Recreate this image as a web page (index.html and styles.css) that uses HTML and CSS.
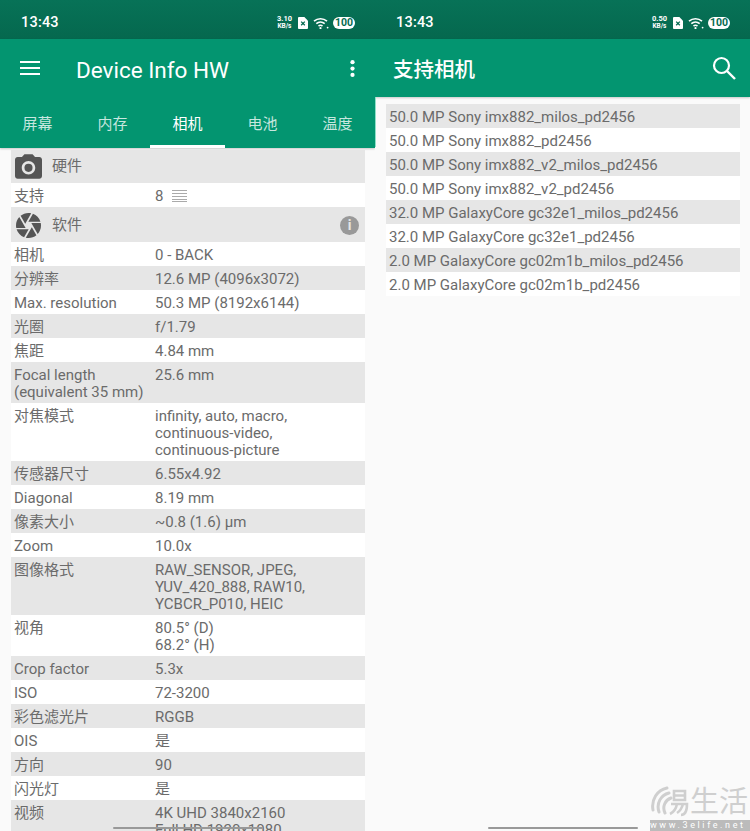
FILE: index.html
```html
<!DOCTYPE html>
<html lang="zh">
<head>
    <meta charset="UTF-8">
    <title>Device Info HW</title>
    <link rel="stylesheet" href="styles.css">
</head>
<body>
    <div class="screens">
        <!-- Left: camera tab -->
        <section class="screen">
            <div class="status-bar">
                <span class="clock">13:43</span>
                <div class="status-icons">
                    <span class="speed">3.10<br><small>KB/s</small></span>
                    <svg class="sim" viewBox="0 0 11 13"><path d="M1 0h6l4 4v8a1 1 0 0 1-1 1H1a1 1 0 0 1-1-1V1a1 1 0 0 1 1-1z" fill="#fff"/><path d="M3.500 5l4 4M7.500 5l-4 4" stroke="#066c52" stroke-width="1.400"/></svg>
                    <svg class="wifi" viewBox="0 0 16 12"><path d="M1 4.200a10 10 0 0 1 13 0M3.300 6.600a6.600 6.600 0 0 1 8.400 0M5.500 9a3.300 3.300 0 0 1 4 0" fill="none" stroke="#fff" stroke-width="1.600"/><circle cx="7.500" cy="11" r="1.100" fill="#fff"/><circle cx="14.600" cy="10.600" r=".9" fill="#fff"/></svg>
                    <span class="battery">100</span>
                </div>
            </div>
            <header class="app-bar">
                <div class="toolbar">
                    <svg class="menu-icon" viewBox="0 0 20 14"><path d="M0 1h20M0 7h20M0 13h20" stroke="#fff" stroke-width="2"/></svg>
                    <h1 class="app-title">Device Info HW</h1>
                    <svg class="more-icon" viewBox="0 0 4 16"><circle cx="2" cy="2" r="2"/><circle cx="2" cy="8" r="2"/><circle cx="2" cy="14" r="2"/></svg>
                </div>
                <nav class="tabs">
                    <span class="tab">屏幕</span>
                    <span class="tab">内存</span>
                    <span class="tab active">相机</span>
                    <span class="tab">电池</span>
                    <span class="tab">温度</span>
                </nav>
            </header>
            <div class="info-list">
                <div class="section-head hw">
                    <svg class="camera-icon" viewBox="2 2 20 18"><path d="M9 2L7.170 4H4c-1.100 0-2 .9-2 2v12c0 1.100.9 2 2 2h16c1.100 0 2-.9 2-2V6c0-1.100-.9-2-2-2h-3.170L15 2H9zm3 15c-2.760 0-5-2.240-5-5s2.240-5 5-5 5 2.240 5 5-2.240 5-5 5z"/><circle cx="12" cy="12" r="3"/></svg>
                    <span>硬件</span>
                </div>
                <div class="row plain">
                    <span>支持</span>
                    <span class="count">8
                        <svg class="list-icon" viewBox="0 0 15 12"><path d="M0 .5h15M0 3.500h15M0 6.500h15M0 9.500h15M0 11.500h15" stroke="#aaa"/></svg>
                    </span>
                </div>
                <div class="section-head sw">
                    <svg class="aperture-icon" viewBox="2 2 20 20"><path d="M9.400 10.500l4.770-8.260C13.470 2.090 12.750 2 12 2c-2.400 0-4.600.85-6.320 2.250l3.660 6.350.06-.1zM21.540 9c-.92-2.920-3.150-5.260-6-6.340L11.880 9h9.660zm.26 1h-7.490l.29.5 4.760 8.250C21 16.970 22 14.610 22 12c0-.69-.07-1.350-.2-2zM8.540 12l-3.900-6.750C3.010 7.030 2 9.390 2 12c0 .69.07 1.350.2 2h7.490l-1.150-2zm-6.080 3c.92 2.920 3.150 5.260 6 6.340L12.120 15H2.460zm11.270 0l-3.900 6.760c.7.15 1.420.24 2.170.24 2.400 0 4.600-.85 6.320-2.250l-3.660-6.350-.93 1.600z"/></svg>
                    <span>软件</span>
                    <span class="info-badge">i</span>
                </div>
                <div class="rows">
                    <div class="row"><span>相机</span><span>0 - BACK</span></div>
                    <div class="row"><span>分辨率</span><span>12.6 MP (4096x3072)</span></div>
                    <div class="row"><span>Max. resolution</span><span>50.3 MP (8192x6144)</span></div>
                    <div class="row"><span>光圈</span><span>f/1.79</span></div>
                    <div class="row"><span>焦距</span><span>4.84 mm</span></div>
                    <div class="row"><span>Focal length<br>(equivalent 35 mm)</span><span>25.6 mm</span></div>
                    <div class="row"><span>对焦模式</span><span>infinity, auto, macro,<br>continuous-video,<br>continuous-picture</span></div>
                    <div class="row"><span>传感器尺寸</span><span>6.55x4.92</span></div>
                    <div class="row"><span>Diagonal</span><span>8.19 mm</span></div>
                    <div class="row"><span>像素大小</span><span>~0.8 (1.6) µm</span></div>
                    <div class="row"><span>Zoom</span><span>10.0x</span></div>
                    <div class="row"><span>图像格式</span><span>RAW_SENSOR, JPEG,<br>YUV_420_888, RAW10,<br>YCBCR_P010, HEIC</span></div>
                    <div class="row"><span>视角</span><span>80.5° (D)<br>68.2° (H)</span></div>
                    <div class="row"><span>Crop factor</span><span>5.3x</span></div>
                    <div class="row"><span>ISO</span><span>72-3200</span></div>
                    <div class="row"><span>彩色滤光片</span><span>RGGB</span></div>
                    <div class="row"><span>OIS</span><span>是</span></div>
                    <div class="row"><span>方向</span><span>90</span></div>
                    <div class="row"><span>闪光灯</span><span>是</span></div>
                    <div class="row"><span>视频</span><span>4K UHD 3840x2160<br>Full HD 1920x1080</span></div>
                </div>
            </div>
            <div class="home-bar"></div>
        </section>

        <!-- Right: supported cameras -->
        <section class="screen">
            <div class="status-bar">
                <span class="clock">13:43</span>
                <div class="status-icons">
                    <span class="speed">0.50<br><small>KB/s</small></span>
                    <svg class="sim" viewBox="0 0 11 13"><path d="M1 0h6l4 4v8a1 1 0 0 1-1 1H1a1 1 0 0 1-1-1V1a1 1 0 0 1 1-1z" fill="#fff"/><path d="M3.500 5l4 4M7.500 5l-4 4" stroke="#066c52" stroke-width="1.400"/></svg>
                    <svg class="wifi" viewBox="0 0 16 12"><path d="M1 4.200a10 10 0 0 1 13 0M3.300 6.600a6.600 6.600 0 0 1 8.400 0M5.500 9a3.300 3.300 0 0 1 4 0" fill="none" stroke="#fff" stroke-width="1.600"/><circle cx="7.500" cy="11" r="1.100" fill="#fff"/><circle cx="14.600" cy="10.600" r=".9" fill="#fff"/></svg>
                    <span class="battery">100</span>
                </div>
            </div>
            <header class="app-bar sub">
                <h1 class="sub-title">支持相机</h1>
                <svg class="search-icon" viewBox="0 0 24 24"><circle cx="9.500" cy="9.500" r="7.500" fill="none" stroke="#fff" stroke-width="2.200"/><path d="M15 15l8 8" stroke="#fff" stroke-width="2.400"/></svg>
            </header>
            <div class="edge"></div>
            <div class="camera-list">
                <div class="camera-item">50.0 MP Sony imx882_milos_pd2456</div>
                <div class="camera-item">50.0 MP Sony imx882_pd2456</div>
                <div class="camera-item">50.0 MP Sony imx882_v2_milos_pd2456</div>
                <div class="camera-item">50.0 MP Sony imx882_v2_pd2456</div>
                <div class="camera-item">32.0 MP GalaxyCore gc32e1_milos_pd2456</div>
                <div class="camera-item">32.0 MP GalaxyCore gc32e1_pd2456</div>
                <div class="camera-item">2.0 MP GalaxyCore gc02m1b_milos_pd2456</div>
                <div class="camera-item">2.0 MP GalaxyCore gc02m1b_pd2456</div>
            </div>
            <div class="home-bar"></div>
            <div class="watermark">
                <div class="mark-top">
                    <svg class="mark-swirl" viewBox="0 0 40 32"><path d="M3 24C1 14 7 4 17 2M9 26C6 17 11 9 19 7M15 27c-3-6 0-13 6-15" fill="none" stroke="#cfcfcf" stroke-width="3" stroke-linecap="round"/><path d="M24 5h11v9H24zM24 9.500h11M21 18h16c0 7-2 11-6 11M27 18c-1 5-3 8-7 10M33 18c-1 4-3 7-6 9" fill="none" stroke="#cfcfcf" stroke-width="2.600"/></svg>
                    <span class="mark-name">生活</span>
                </div>
                <div class="mark-url">www.3elife.net</div>
            </div>
        </section>
    </div>
</body>
</html>
```

FILE: styles.css
```css
/* Two phone screens side by side */
html, body {
    height: 100%;
    margin: 0;
    padding: 0;
    overflow: hidden;
    background: #fafafa;
    font-family: Roboto, 'Noto Sans CJK SC', sans-serif;
}

.screens {
    display: grid;
    grid-template-columns: 375px 375px;
    height: 831px;
}

.screen {
    position: relative;
    height: 831px;
    overflow: hidden;
    background: #fafafa;
}

/* Status bar */
.status-bar {
    display: flex;
    justify-content: space-between;
    align-items: center;
    height: 39px;
    padding: 6px 20px 0 21px;
    box-sizing: border-box;
    background: linear-gradient(#077257, #05684e);
    color: #fff;
}

.clock {
    font-size: 14.5px;
    font-weight: 500;
    letter-spacing: 0.2px;
}

.status-icons {
    display: flex;
    align-items: center;
    gap: 6px;
}

.speed {
    font-size: 7.5px;
    font-weight: 700;
    line-height: 7px;
    text-align: center;
}

.speed small {
    font-size: 6.5px;
}

.sim {
    width: 10px;
    height: 12px;
}

.wifi {
    width: 16px;
    height: 12px;
    margin-left: -1px;
    margin-right: -2px;
}

.battery {
    width: 22px;
    height: 12px;
    border-radius: 6px;
    background: #fff;
    color: #066c52;
    font-size: 10.5px;
    font-weight: 700;
    line-height: 12px;
    text-align: center;
}

/* App bar and tabs */
.app-bar {
    height: 109px;
    background: #039570;
    color: #fff;
    box-shadow: 0 1px 2px rgba(0, 0, 0, 0.2);
}

.toolbar {
    display: flex;
    align-items: center;
    height: 58px;
    padding: 0 20px;
}

.menu-icon {
    width: 20px;
    height: 14px;
    margin-right: 36px;
}

.app-title, .sub-title {
    flex: 1;
    margin: 0;
    font-weight: 400;
}

.app-title {
    padding-top: 4px;
    font-size: 22.5px;
}

.more-icon {
    width: 5px;
    height: 17px;
    fill: #fff;
}

.tabs {
    display: grid;
    grid-template-columns: repeat(5, 75px);
    height: 51px;
}

.tab {
    display: flex;
    align-items: center;
    justify-content: center;
    box-sizing: border-box;
    padding-top: 2px;
    border-bottom: 3px solid transparent;
    font-size: 15px;
    color: rgba(255, 255, 255, 0.78);
}

.tab.active {
    color: #fff;
    border-bottom-color: #fff;
}

.app-bar.sub {
    display: flex;
    align-items: center;
    height: 58px;
    padding: 0 14px 0 18px;
}

.sub-title {
    font-size: 20.5px;
    font-weight: 500;
}

.search-icon {
    width: 24px;
    height: 24px;
}

.edge {
    position: absolute;
    left: 0;
    top: 97px;
    width: 1px;
    height: 50px;
    background: #8fe0c8;
}

/* Info rows */
.info-list {
    margin: 2px 10px 0 11px;
    font-size: 15px;
    line-height: 17px;
    color: #6b6b6b;
}

.section-head {
    display: flex;
    align-items: center;
    background: #e6e6e6;
}

.section-head.hw {
    height: 33px;
}

.section-head.sw {
    height: 34px;
    padding-top: 1px;
}

.camera-icon {
    width: 27px;
    height: 25px;
    fill: #555;
    margin: 0 10px 0 4px;
}

.aperture-icon {
    width: 25px;
    height: 25px;
    fill: #555;
    margin: 0 11px 0 5px;
}

.info-badge {
    width: 19px;
    height: 19px;
    margin: 0 6px 0 auto;
    border-radius: 50%;
    background: #999;
    color: #e6e6e6;
    font-size: 14px;
    font-weight: 700;
    line-height: 19px;
    text-align: center;
}

.row {
    display: grid;
    grid-template-columns: 141px 1fr;
    padding: 5px 3px 2px;
    background: #fff;
}

.rows .row:nth-child(even) {
    background: #e6e6e6;
}

.count {
    display: flex;
    align-items: center;
    gap: 9px;
}

.list-icon {
    width: 15px;
    height: 12px;
    margin-top: -1px;
}

/* Camera list on the right */
.camera-list {
    margin: 7px 10px 0 11px;
    font-size: 15px;
    line-height: 17px;
    color: #6b6b6b;
}

.camera-item {
    padding: 5px 3px 2px;
    background: #fff;
}

.camera-item:nth-child(odd) {
    background: #e6e6e6;
}

/* Overlays */
.home-bar {
    position: absolute;
    left: 113px;
    bottom: 2px;
    width: 150px;
    height: 2px;
    border-radius: 1px;
    background: #999;
}

.watermark {
    position: absolute;
    right: 0;
    bottom: 0;
    width: 100px;
}

.mark-top {
    display: flex;
    align-items: center;
    height: 34px;
    margin-bottom: 1px;
}

.mark-swirl {
    width: 40px;
    height: 32px;
}

.mark-name {
    font-size: 29px;
    line-height: 34px;
    color: #cfcfcf;
    white-space: nowrap;
}

.mark-url {
    height: 11px;
    background: #bbb;
    color: #fff;
    font-size: 9px;
    line-height: 11px;
    letter-spacing: 2.6px;
    white-space: nowrap;
    overflow: hidden;
}
```
